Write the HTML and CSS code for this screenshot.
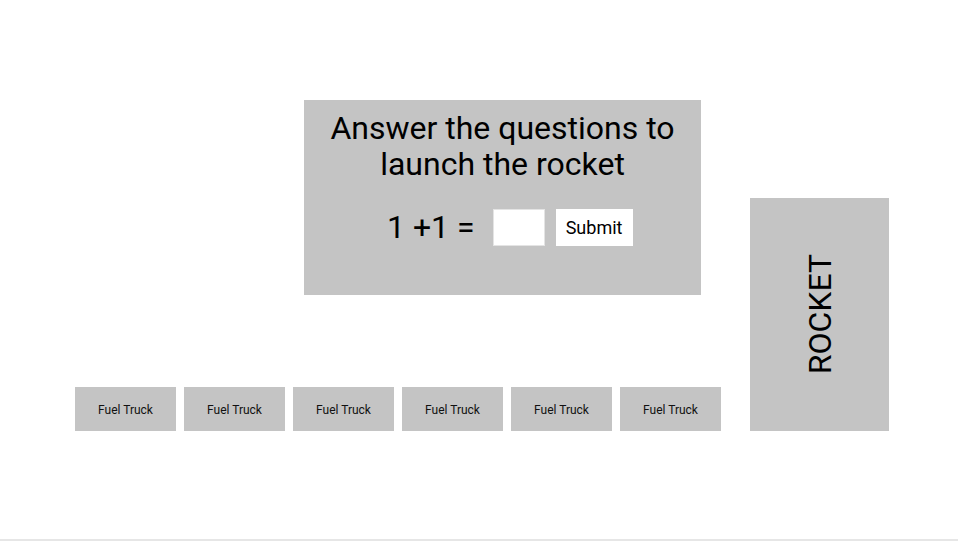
FILE: index.html
```html
<!DOCTYPE html>
<html lang="en">
<head>
<meta charset="utf-8">
<title>Rocket Launch</title>
<link rel="stylesheet" href="styles.css">
</head>
<body>
<div class="page">
  <div class="stage">
    <div class="left">
      <section class="quiz">
        <h1 class="quiz-title">Answer the questions to<br>launch the rocket</h1>
        <form class="quiz-row" onsubmit="return false;">
          <span class="equation">1 +1 =</span>
          <input class="answer" type="text" aria-label="Answer">
          <button class="submit" type="submit">Submit</button>
        </form>
      </section>
      <div class="trucks">
        <div class="truck">Fuel Truck</div>
        <div class="truck">Fuel Truck</div>
        <div class="truck">Fuel Truck</div>
        <div class="truck">Fuel Truck</div>
        <div class="truck">Fuel Truck</div>
        <div class="truck">Fuel Truck</div>
      </div>
    </div>
    <div class="rocket"><span class="rocket-label">ROCKET</span></div>
  </div>
</div>
</body>
</html>
```
FILE: styles.css
```css
html, body {
  margin: 0;
  padding: 0;
  background: #ffffff;
}
body {
  font-family: Roboto, "Liberation Sans", sans-serif;
  color: #000;
}
.page {
  height: 539px;
  border-bottom: 2px solid #e6e6e6;
  overflow: hidden;
}
.stage {
  display: flex;
  align-items: flex-end;
  gap: 29px;
  padding: 100px 0 0 75px;
}
.left {
  display: flex;
  flex-direction: column;
  width: 646px;
}
.quiz {
  margin-left: 229px;
  width: 397px;
  height: 195px;
  box-sizing: border-box;
  background: #c4c4c4;
  padding-top: 10px;
}
.quiz-title {
  margin: 0;
  font-size: 32px;
  font-weight: 400;
  line-height: 36px;
  text-align: center;
}
.quiz-row {
  display: flex;
  align-items: center;
  margin: 27px 0 0 0;
  padding-left: 83px;
  height: 37px;
}
.equation {
  font-size: 32px;
  line-height: 37px;
  margin-right: 18px;
}
.answer {
  width: 52px;
  height: 37px;
  box-sizing: border-box;
  border: 1px solid #e4e4e4;
  background: #fff;
  margin: 0 11px 0 0;
  padding: 0;
  outline: none;
}
.submit {
  width: 77px;
  height: 37px;
  box-sizing: border-box;
  border: none;
  background: #fff;
  font-family: Roboto, "Liberation Sans", sans-serif;
  font-size: 18px;
  color: #000;
  padding: 0;
  cursor: pointer;
}
.trucks {
  display: flex;
  gap: 8px;
  margin-top: 92px;
}
.truck {
  width: 101px;
  height: 44px;
  padding-top: 1px;
  box-sizing: border-box;
  background: #c4c4c4;
  display: flex;
  align-items: center;
  justify-content: center;
  font-size: 12px;
  color: #111;
}
.rocket {
  width: 139px;
  height: 233px;
  background: #c4c4c4;
  display: flex;
  align-items: center;
  justify-content: center;
}
.rocket-label {
  writing-mode: vertical-rl;
  transform: rotate(180deg);
  font-size: 32px;
  line-height: 1;
}
```
